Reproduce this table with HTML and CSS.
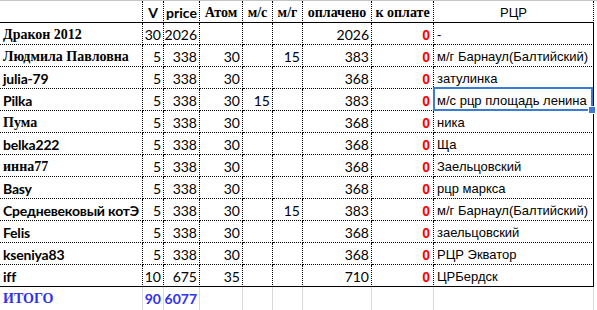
FILE: index.html
```html
<!DOCTYPE html>
<html lang="ru">
<head>
<meta charset="utf-8">
<title>Таблица</title>
<link rel="stylesheet" href="styles.css">
</head>
<body>
<div class="sheet">
  <div class="c h first"></div>
  <div class="c h sans">V</div>
  <div class="c h sans">price</div>
  <div class="c h">Атом</div>
  <div class="c h">м/с</div>
  <div class="c h">м/г</div>
  <div class="c h">оплачено</div>
  <div class="c h">к оплате</div>
  <div class="c h rcrh">РЦР</div>

  <div class="c name serif">Дракон 2012</div>
  <div class="c num">30</div>
  <div class="c num">2026</div>
  <div class="c num"></div>
  <div class="c num"></div>
  <div class="c num"></div>
  <div class="c num">2026</div>
  <div class="c num zero">0</div>
  <div class="c rcr">-</div>

  <div class="c name serif">Людмила Павловна</div>
  <div class="c num">5</div>
  <div class="c num">338</div>
  <div class="c num">30</div>
  <div class="c num"></div>
  <div class="c num">15</div>
  <div class="c num">383</div>
  <div class="c num zero">0</div>
  <div class="c rcr">м/г Барнаул(Балтийский)</div>

  <div class="c name">julia-79</div>
  <div class="c num">5</div>
  <div class="c num">338</div>
  <div class="c num">30</div>
  <div class="c num"></div>
  <div class="c num"></div>
  <div class="c num">368</div>
  <div class="c num zero">0</div>
  <div class="c rcr">затулинка</div>

  <div class="c name">Pilka</div>
  <div class="c num">5</div>
  <div class="c num">338</div>
  <div class="c num">30</div>
  <div class="c num">15</div>
  <div class="c num"></div>
  <div class="c num">383</div>
  <div class="c num zero">0</div>
  <div class="c rcr selected">м/с рцр площадь ленина<span class="handle"></span></div>

  <div class="c name serif">Пума</div>
  <div class="c num">5</div>
  <div class="c num">338</div>
  <div class="c num">30</div>
  <div class="c num"></div>
  <div class="c num"></div>
  <div class="c num">368</div>
  <div class="c num zero">0</div>
  <div class="c rcr">ника</div>

  <div class="c name">belka222</div>
  <div class="c num">5</div>
  <div class="c num">338</div>
  <div class="c num">30</div>
  <div class="c num"></div>
  <div class="c num"></div>
  <div class="c num">368</div>
  <div class="c num zero">0</div>
  <div class="c rcr">Ща</div>

  <div class="c name serif">инна77</div>
  <div class="c num">5</div>
  <div class="c num">338</div>
  <div class="c num">30</div>
  <div class="c num"></div>
  <div class="c num"></div>
  <div class="c num">368</div>
  <div class="c num zero">0</div>
  <div class="c rcr">Заельцовский</div>

  <div class="c name">Basy</div>
  <div class="c num">5</div>
  <div class="c num">338</div>
  <div class="c num">30</div>
  <div class="c num"></div>
  <div class="c num"></div>
  <div class="c num">368</div>
  <div class="c num zero">0</div>
  <div class="c rcr">рцр маркса</div>

  <div class="c name">Средневековый котЭ</div>
  <div class="c num">5</div>
  <div class="c num">338</div>
  <div class="c num">30</div>
  <div class="c num"></div>
  <div class="c num">15</div>
  <div class="c num">383</div>
  <div class="c num zero">0</div>
  <div class="c rcr">м/г Барнаул(Балтийский)</div>

  <div class="c name">Felis</div>
  <div class="c num">5</div>
  <div class="c num">338</div>
  <div class="c num">30</div>
  <div class="c num"></div>
  <div class="c num"></div>
  <div class="c num">368</div>
  <div class="c num zero">0</div>
  <div class="c rcr">заельцовский</div>

  <div class="c name">kseniya83</div>
  <div class="c num">5</div>
  <div class="c num">338</div>
  <div class="c num">30</div>
  <div class="c num"></div>
  <div class="c num"></div>
  <div class="c num">368</div>
  <div class="c num zero">0</div>
  <div class="c rcr">РЦР Экватор</div>

  <div class="c name last">iff</div>
  <div class="c num last">10</div>
  <div class="c num last">675</div>
  <div class="c num last">35</div>
  <div class="c num last"></div>
  <div class="c num last"></div>
  <div class="c num last">710</div>
  <div class="c num zero last">0</div>
  <div class="c rcr last">ЦРБердск</div>

  <div class="c t name serif total">ИТОГО</div>
  <div class="c t num total">90</div>
  <div class="c t num total">6077</div>
  <div class="c t"></div>
  <div class="c t"></div>
  <div class="c t"></div>
  <div class="c t"></div>
  <div class="c t"></div>
  <div class="c t"></div>
</div>
</body>
</html>
```

FILE: styles.css
```css
html, body {
  margin: 0;
  padding: 0;
  background: #ffffff;
}

body {
  width: 597px;
  height: 310px;
  overflow: hidden;
  border-top: 1px solid #c6c6c6;
  box-sizing: border-box;
}

.sheet {
  display: grid;
  grid-template-columns: 143px 21px 36px 43px 30px 30px 69px 62px 160px;
  grid-auto-rows: 22px;
  font-family: "Lato", "Liberation Sans", sans-serif;
  font-size: 14px;
  color: #000;
}

.c {
  box-sizing: border-box;
  height: 22px;
  border-right: 1px dotted #000;
  border-bottom: 1px dotted #000;
  line-height: 18px;
  padding-top: 3px;
  white-space: nowrap;
  overflow: visible;
  position: relative;
}

.h {
  border-bottom: 1px solid #000;
  font-family: "Liberation Serif", serif;
  font-weight: bold;
  font-size: 14px;
  text-align: center;
}

.h.sans {
  font-family: "Lato", "Liberation Sans", sans-serif;
  font-size: 14px;
}

.h.rcrh {
  font-family: "Liberation Sans", sans-serif;
  font-weight: normal;
  font-size: 13px;
}

.name {
  font-weight: bold;
  padding-left: 3px;
  letter-spacing: -0.2px;
}

.serif {
  font-family: "Liberation Serif", serif;
  font-size: 14px;
  letter-spacing: 0;
}

.num {
  text-align: right;
  padding-right: 2px;
}

.zero {
  color: #ff0000;
  font-family: "Liberation Sans", sans-serif;
  font-weight: bold;
  font-size: 14px;
  padding-right: 3px;
}

.rcr {
  font-family: "Liberation Sans", sans-serif;
  font-size: 13px;
  padding-left: 3px;
  border-right: 1px solid #000;
}

.last {
  border-bottom: 1px solid #000;
}

.t {
  border-bottom: none;
  border-right: 1px solid #dadada;
  height: 23px;
}

.total {
  color: #3030f0;
  font-weight: bold;
}

.selected::after {
  content: "";
  position: absolute;
  left: -1px;
  top: -2px;
  right: 0;
  bottom: -1px;
  border: 2px solid #3b7ad6;
}

.handle {
  position: absolute;
  right: -3px;
  bottom: -4px;
  width: 6px;
  height: 6px;
  background: #3b7ad6;
  border: 1px solid #fff;
  z-index: 2;
}
```
